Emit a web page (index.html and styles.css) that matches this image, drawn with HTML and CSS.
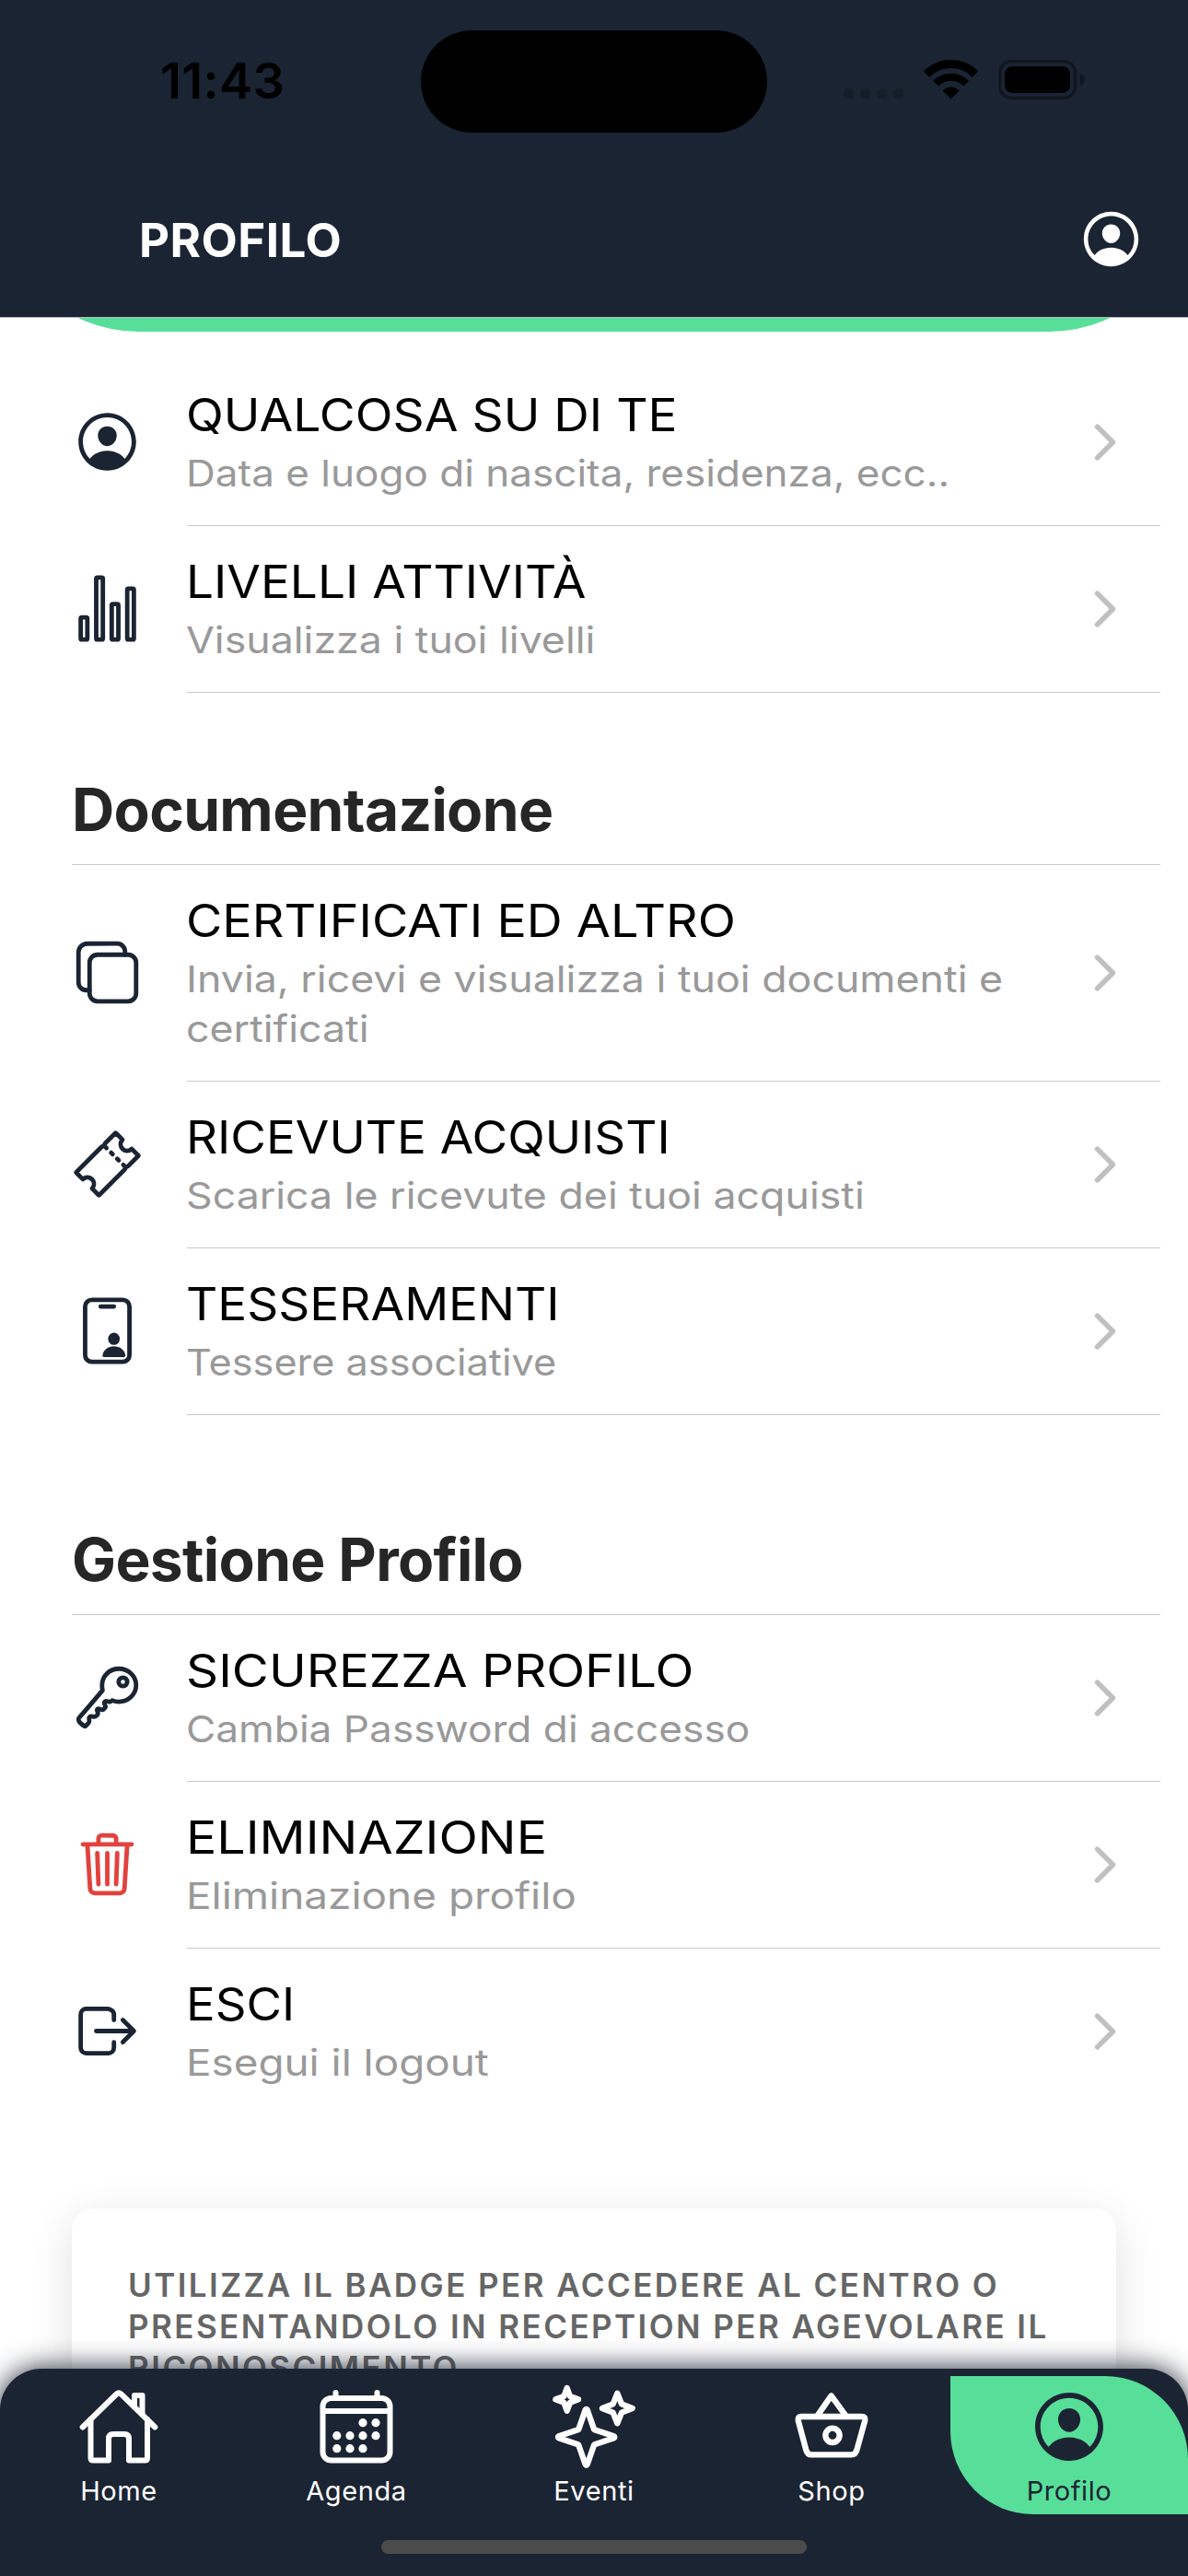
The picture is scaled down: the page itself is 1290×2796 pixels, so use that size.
FILE: index.html
```html
<!DOCTYPE html>
<html lang="it">
<head>
<meta charset="utf-8">
<title>Profilo</title>
<link rel="stylesheet" href="styles.css">
</head>
<body>
<svg class="defs" aria-hidden="true">
  <symbol id="person-circle" viewBox="0 0 512 512">
    <path d="M258.9 48C141.92 46.42 46.42 141.92 48 258.9c1.56 112.19 92.91 203.54 205.1 205.1 117 1.6 212.48-93.9 210.88-210.88C462.44 140.91 371.09 49.56 258.9 48zm126.42 327.25a4 4 0 01-6.14-.32 124.27 124.27 0 00-32.35-29.59C321.37 329 289.11 320 256 320s-65.37 9-90.83 25.34a124.24 124.24 0 00-32.35 29.58 4 4 0 01-6.14.32A175.32 175.32 0 0180 259c-1.63-97.31 78.22-178.76 175.57-179S432 158.81 432 256a175.32 175.32 0 01-46.68 119.25z"/>
    <path d="M256 144c-19.72 0-37.55 7.39-50.22 20.82s-19 32-17.57 51.93C191.11 256 221.52 288 256 288s64.83-32 67.79-71.24c1.48-19.74-4.8-38.14-17.68-51.82C293.39 151.44 275.59 144 256 144z"/>
  </symbol>
  <symbol id="chevron" viewBox="0 0 512 512">
    <path class="stroke-thick" d="M184 112l144 144-144 144"/>
  </symbol>
</svg>

<div class="screen">
  <header class="header">
    <div class="status">
      <div class="time">11:43</div>
      <div class="island"></div>
      <svg class="indicators" viewBox="0 0 900 300">
        <g fill="#151d29">
          <rect x="48" y="168" width="33" height="33" rx="12"/>
          <rect x="102" y="168" width="33" height="33" rx="12"/>
          <rect x="156" y="168" width="33" height="33" rx="12"/>
          <rect x="210" y="168" width="33" height="33" rx="12"/>
        </g>
        <g fill="none" stroke="#000">
          <path stroke-width="27" d="M318.5 121.5a112.5 112.5 0 01159 0"/>
          <path stroke-width="24" d="M348.5 151.5a70 70 0 0199 0"/>
        </g>
        <path d="M398 202l-27.500-27.500a39 39 0 0155 0z"/>
        <rect x="557.500" y="80" width="245" height="119" rx="37" fill="none" stroke="#10161f" stroke-width="10"/>
        <rect x="573" y="96" width="213" height="87" rx="25"/>
        <path fill="#10161f" d="M818 119q15 6 15 20t-15 20z"/>
      </svg>
    </div>
    <div class="navbar">
      <h1 class="nav-title">PROFILO</h1>
      <svg class="nav-icon"><use href="#person-circle"/></svg>
    </div>
  </header>

  <main class="content">
    <div class="banner"><div class="banner-shape"></div></div>

    <ul class="list">
      <li class="row about">
        <svg class="row-icon"><use href="#person-circle"/></svg>
        <div class="row-body">
          <div class="row-text"><div class="row-title">QUALCOSA SU DI TE</div><div class="row-sub">Data e luogo di nascita, residenza, ecc..</div></div>
          <svg class="row-chevron"><use href="#chevron"/></svg>
        </div>
      </li>
      <li class="row levels">
        <svg class="row-icon line-icon" viewBox="0 0 512 512">
          <rect x="64" y="320" width="48" height="160" rx="8"/>
          <rect x="288" y="224" width="48" height="256" rx="8"/>
          <rect x="400" y="112" width="48" height="368" rx="8"/>
          <rect x="176" y="32" width="48" height="448" rx="8"/>
        </svg>
        <div class="row-body">
          <div class="row-text"><div class="row-title">LIVELLI ATTIVITÀ</div><div class="row-sub">Visualizza i tuoi livelli</div></div>
          <svg class="row-chevron"><use href="#chevron"/></svg>
        </div>
      </li>
    </ul>

    <h2 class="section">Documentazione</h2>
    <ul class="list">
      <li class="row certificates">
        <svg class="row-icon line-icon" viewBox="0 0 512 512">
          <rect x="128" y="128" width="336" height="336" rx="57"/>
          <path d="M383.500 128l.5-24a56.160 56.160 0 00-56-56H112a64.190 64.190 0 00-64 64v216a56.160 56.160 0 0056 56h24"/>
        </svg>
        <div class="row-body">
          <div class="row-text"><div class="row-title">CERTIFICATI ED ALTRO</div><div class="row-sub">Invia, ricevi e visualizza i tuoi documenti e certificati</div></div>
          <svg class="row-chevron"><use href="#chevron"/></svg>
        </div>
      </li>
      <li class="row receipts">
        <svg class="row-icon line-icon" viewBox="0 0 512 512">
          <path d="M366.050 146a46.700 46.700 0 01-2.420-63.420 3.870 3.870 0 00-.22-5.260l-44.130-44.180a3.890 3.890 0 00-5.500 0l-70.340 70.340a23.620 23.620 0 00-5.710 9.240 23.660 23.660 0 01-14.950 15 23.700 23.700 0 00-9.250 5.710L33.140 313.780a3.890 3.890 0 000 5.500l44.130 44.130a3.870 3.870 0 005.260.22 46.690 46.690 0 0165.840 65.840 3.870 3.870 0 00.22 5.260l44.130 44.130a3.890 3.890 0 005.500 0l180.400-180.390a23.700 23.700 0 005.710-9.250 23.660 23.660 0 0114.950-15 23.620 23.620 0 009.240-5.710l70.340-70.340a3.890 3.890 0 000-5.500l-44.130-44.130a3.870 3.870 0 00-5.260-.22 46.700 46.700 0 01-63.430-2.320z"/>
          <path d="M250.500 140.440l-16.510-16.510M294.520 184.460l-11.010-11M338.540 228.490l-11.010-11.010M388.070 278.010l-16.510-16.510"/>
        </svg>
        <div class="row-body">
          <div class="row-text"><div class="row-title">RICEVUTE ACQUISTI</div><div class="row-sub">Scarica le ricevute dei tuoi acquisti</div></div>
          <svg class="row-chevron"><use href="#chevron"/></svg>
        </div>
      </li>
      <li class="row membership">
        <svg class="row-icon line-icon" viewBox="0 0 512 512">
          <rect x="96" y="32" width="320" height="448" rx="48"/>
          <path d="M208 80h96"/>
          <ellipse class="solid" cx="304" cy="314" rx="42" ry="44"/>
          <path class="solid" d="M222 434c4-40 40-66 82-66s78 26 83 66q0 11-10 11H232q-10 0-10-11z"/>
        </svg>
        <div class="row-body">
          <div class="row-text"><div class="row-title">TESSERAMENTI</div><div class="row-sub">Tessere associative</div></div>
          <svg class="row-chevron"><use href="#chevron"/></svg>
        </div>
      </li>
    </ul>

    <h2 class="section section-spaced">Gestione Profilo</h2>
    <ul class="list">
      <li class="row security">
        <svg class="row-icon line-icon" viewBox="0 0 512 512">
          <path d="M218.100 167.170c0 13 0 25.600 4.100 37.400-43.100 50.600-156.900 184.300-167.500 194.500a20.170 20.170 0 00-6.700 15c0 8.500 5.200 16.700 9.600 21.300 6.600 6.900 34.800 33 40 28 15.400-15 18.500-19 24.800-25.200 9.500-9.300-1-28.300 2.300-36s6.800-9.200 12.500-10.400 15.800 2.900 23.700 3c8.300.1 12.800-3.400 19-9.200 5-4.600 8.600-8.900 8.700-15.600.2-9-12.800-20.900-3.100-30.400s23.700 6.200 34 5 22.800-15.500 24.100-21.600-11.700-21.800-9.700-30.700c.7-3 6.800-10 11.400-11s25 6.900 29.600 5.900c5.600-1.200 12.100-7.100 17.400-10.400 15.500 6.700 29.600 9.400 47.700 9.400 68.500 0 124-53.400 124-119.200S408.500 48 340 48s-121.900 53.370-121.900 119.170z"/>
          <circle cx="369" cy="143" r="31"/>
        </svg>
        <div class="row-body">
          <div class="row-text"><div class="row-title">SICUREZZA PROFILO</div><div class="row-sub">Cambia Password di accesso</div></div>
          <svg class="row-chevron"><use href="#chevron"/></svg>
        </div>
      </li>
      <li class="row deletion">
        <svg class="row-icon line-icon danger" viewBox="0 0 512 512">
          <path d="M112 112l20 320c.95 18.490 14.400 32 32 32h184c17.670 0 30.870-13.510 32-32l20-320M80 112h352M192 112V72a23.930 23.930 0 0124-24h80a23.930 23.930 0 0124 24v40M256 176v224M184 176l8 224M328 176l-8 224"/>
        </svg>
        <div class="row-body">
          <div class="row-text"><div class="row-title">ELIMINAZIONE</div><div class="row-sub">Eliminazione profilo</div></div>
          <svg class="row-chevron"><use href="#chevron"/></svg>
        </div>
      </li>
      <li class="row logout">
        <svg class="row-icon line-icon" viewBox="0 0 512 512">
          <path d="M304 336v40a40 40 0 01-40 40H104a40 40 0 01-40-40V136a40 40 0 0140-40h152c22.090 0 48 17.910 48 40v40M368 336l80-80-80-80M176 256h256"/>
        </svg>
        <div class="row-body">
          <div class="row-text"><div class="row-title">ESCI</div><div class="row-sub">Esegui il logout</div></div>
          <svg class="row-chevron"><use href="#chevron"/></svg>
        </div>
      </li>
    </ul>

    <section class="card">
      <p class="card-text">UTILIZZA IL BADGE PER ACCEDERE AL CENTRO O PRESENTANDOLO IN RECEPTION PER AGEVOLARE IL RICONOSCIMENTO</p>
    </section>
  </main>

  <nav class="tabbar">
    <div class="tabs">
      <a class="tab">
        <svg class="tab-icon" viewBox="0 0 96 96">
          <path d="M17.500 41V83q0 2.500 2.500 2.500H37V62q0-5 5-5h12q5 0 5 5v23.500h17.500q2.500 0 2.500-2.500V41"/>
          <path d="M8.700 49.500L45.500 13.500q2.500-2.300 5 0L87.300 49.500"/>
          <path d="M65 26V15h8.500v20"/>
        </svg>
        <span>Home</span>
      </a>
      <a class="tab">
        <svg class="tab-icon" viewBox="0 0 96 96">
          <rect x="11.500" y="18" width="73" height="67.500" rx="9"/>
          <path d="M12 32h72M25.500 12v6M70.500 12v6"/>
          <g class="dots">
            <circle cx="55" cy="44.700" r="4.600"/><circle cx="69" cy="44.700" r="4.600"/>
            <circle cx="26.800" cy="58.700" r="4.600"/><circle cx="41" cy="58.700" r="4.600"/><circle cx="55" cy="58.700" r="4.600"/><circle cx="69" cy="58.700" r="4.600"/>
            <circle cx="26.800" cy="72.700" r="4.600"/><circle cx="41" cy="72.700" r="4.600"/><circle cx="55" cy="72.700" r="4.600"/>
          </g>
        </svg>
        <span>Agenda</span>
      </a>
      <a class="tab">
        <svg class="tab-icon" viewBox="0 0 96 96">
          <g transform="translate(-7 -5) scale(.3333)">
            <path d="M137 107q3-5 6 0l22 63q1 1 2 2l63 21q4 3 0 6l-63 21q-1 1-2 2l-22 63q-3 5-6 0l-22-63q-1-1-2-2l-63-21q-4-3 0-6l63-21q1-1 2-2z"/>
            <path d="M241 53l14 35 35 14-35 14-14 35-14-35-35-14 35-14z"/>
            <path d="M77 36l10 27 27 10-27 10-10 27-10-27-27-10 27-10z"/>
          </g>
        </svg>
        <span>Eventi</span>
      </a>
      <a class="tab">
        <svg class="tab-icon" viewBox="0 0 96 96">
          <g transform="translate(-5 -5) scale(.3333)">
            <path d="M60 129H258q12 0 10 12L241 238q-4 15-18 15H94q-14 0-18-15L50 141q-2-12 10-12z"/>
            <path d="M112 127L158 61l48 66"/>
            <circle cx="162" cy="190" r="23"/>
          </g>
        </svg>
        <span>Shop</span>
      </a>
      <a class="tab active">
        <svg class="tab-icon filled" viewBox="0 0 96 96"><use href="#person-circle" x="2.500" y="3.500" width="91" height="91"/></svg>
        <span>Profilo</span>
      </a>
    </div>
    <div class="home-indicator"></div>
  </nav>
</div>
</body>
</html>
```
FILE: styles.css
```css
:root {
  --navy: #1b2433;
  --green: #57df9a;
}

* { box-sizing: border-box; }

body {
  margin: 0;
  background: #fff;
  font-family: Inter, "Liberation Sans", sans-serif;
}

.defs { position: absolute; width: 0; height: 0; }

.screen {
  position: relative;
  display: flex;
  flex-direction: column;
  width: 1290px;
  height: 2796px;
  overflow: hidden;
}

/* Header */
.header {
  flex: none;
  height: 345px;
  background: var(--navy);
  border-bottom: 1px solid #b3b6bd;
}

.status {
  display: grid;
  grid-template-columns: 457px 376px 1fr;
  align-items: start;
  height: 177px;
}

.time {
  padding: 56px 0 0 174px;
  font-size: 54px;
  line-height: 64px;
  font-weight: 600;
  letter-spacing: .4px;
}

.island {
  height: 111px;
  margin-top: 33px;
  border-radius: 56px;
  background: #000;
}

.indicators {
  width: 300px;
  height: 100px;
  margin: 40px 0 0 67px;
}

.navbar {
  display: flex;
  align-items: center;
  justify-content: space-between;
  height: 167px;
  padding: 0 47px 0 151px;
}

.nav-title {
  margin: 0;
  color: #fff;
  font-size: 51px;
  line-height: 60px;
  font-weight: 700;
  letter-spacing: .5px;
}

.nav-icon {
  width: 73px;
  height: 73px;
  margin-bottom: 2px;
  fill: #fff;
}

/* Scrolling content */
.content { flex: 1; min-height: 0; }

.banner {
  display: flex;
  align-items: flex-end;
  height: 15px;
  margin-bottom: 30px;
  overflow: hidden;
}

.banner-shape {
  flex: none;
  width: 100%;
  height: 360px;
  border-radius: 150px;
  background: var(--green);
}

.list { margin: 0; padding: 0; list-style: none; }

.row {
  display: flex;
  align-items: center;
  padding: 0 30px 0 78px;
}

.row-icon {
  flex: none;
  width: 77px;
  height: 77px;
  margin: 0 48px 2px 0;
  fill: var(--navy);
}

.line-icon {
  fill: none;
  stroke: var(--navy);
  stroke-width: 32;
  stroke-linecap: round;
  stroke-linejoin: round;
}

.line-icon .solid { fill: var(--navy); stroke: none; }

.danger { stroke: #e2423d; }

.row-body {
  flex: 1;
  display: flex;
  align-items: center;
  justify-content: space-between;
  padding: 31px 30px 29px 0;
  border-bottom: 1px solid #c8c8c8;
}

.row-text { margin-left: -1px; }

/* Row labels are set slightly extended */
.row-title {
  margin-bottom: 6px;
  color: #000;
  font-size: 49px;
  line-height: 60px;
  transform-origin: left;
}

.row-sub {
  max-width: 860px;
  color: #999;
  font-size: 40px;
  line-height: 54px;
  transform-origin: left;
}

.row-chevron {
  flex: none;
  width: 60px;
  height: 60px;
  margin-bottom: 2px;
}

.stroke-thick {
  fill: none;
  stroke: #c0c0c0;
  stroke-width: 48;
  stroke-linecap: round;
  stroke-linejoin: round;
}

.about .row-title { transform: scaleX(1.088); }
.about .row-sub { transform: scaleX(1.101); }
.levels .row-title { transform: scaleX(1.084); }
.levels .row-sub { transform: scaleX(1.117); }
.certificates .row-title { transform: scaleX(1.1); }
.certificates .row-sub { transform: scaleX(1.118); }
.receipts .row-title { transform: scaleX(1.081); }
.receipts .row-sub { transform: scaleX(1.117); }
.membership .row-title { transform: scaleX(1.084); }
.membership .row-sub { transform: scaleX(1.081); }
.security .row-title { transform: scaleX(1.118); }
.security .row-sub { transform: scaleX(1.105); }
.deletion .row-title { transform: scaleX(1.132); }
.deletion .row-sub { transform: scaleX(1.148); }
.logout .row-title { transform: scaleX(1.075); }
.logout .row-sub { transform: scaleX(1.145); }
.logout .row-body { border-color: transparent; }

.section {
  margin: 0 30px 0 78px;
  padding: 89px 0 21px;
  border-bottom: 1px solid #c8c8c8;
  color: #262626;
  font-size: 64px;
  line-height: 76px;
  font-weight: 700;
  letter-spacing: -.65px;
}

.section-spaced { padding-top: 119px; }

.card {
  height: 500px;
  margin: 101px 78px 0;
  padding: 61px 50px 61px 61px;
  border-radius: 24px;
  background: #fff;
  box-shadow: 0 12px 48px rgba(0, 0, 0, .12);
}

.card-text {
  margin: 0;
  color: #666;
  font-size: 35px;
  line-height: 45px;
  font-weight: 600;
  letter-spacing: 2.43px;
}

/* Tab bar floats over the content */
.tabbar {
  position: absolute;
  left: 0;
  right: 0;
  bottom: 0;
  height: 225px;
  padding-top: 8px;
  border-radius: 45px 45px 0 0;
  background: var(--navy);
  box-shadow: 0 0 30px var(--navy);
}

.tabs {
  display: grid;
  grid-template-columns: repeat(5, 1fr);
  height: 150px;
}

.tab {
  display: flex;
  flex-direction: column;
  align-items: center;
  gap: 5px;
  padding-top: 6px;
  color: #fff;
  font-size: 29px;
  line-height: 36px;
  letter-spacing: .6px;
}

.tab.active {
  border-radius: 0 90px;
  background: var(--green);
  color: var(--navy);
}

.tab-icon {
  width: 96px;
  height: 96px;
  fill: none;
  stroke: currentColor;
  stroke-width: 6;
  stroke-linecap: round;
  stroke-linejoin: round;
}

.tab-icon g { stroke-width: 19; }
.tab-icon .dots, .filled { fill: currentColor; stroke: none; }

.home-indicator {
  width: 462px;
  height: 15px;
  margin: 28px auto 0;
  border-radius: 8px;
  background: #4b4b4b;
}
```
